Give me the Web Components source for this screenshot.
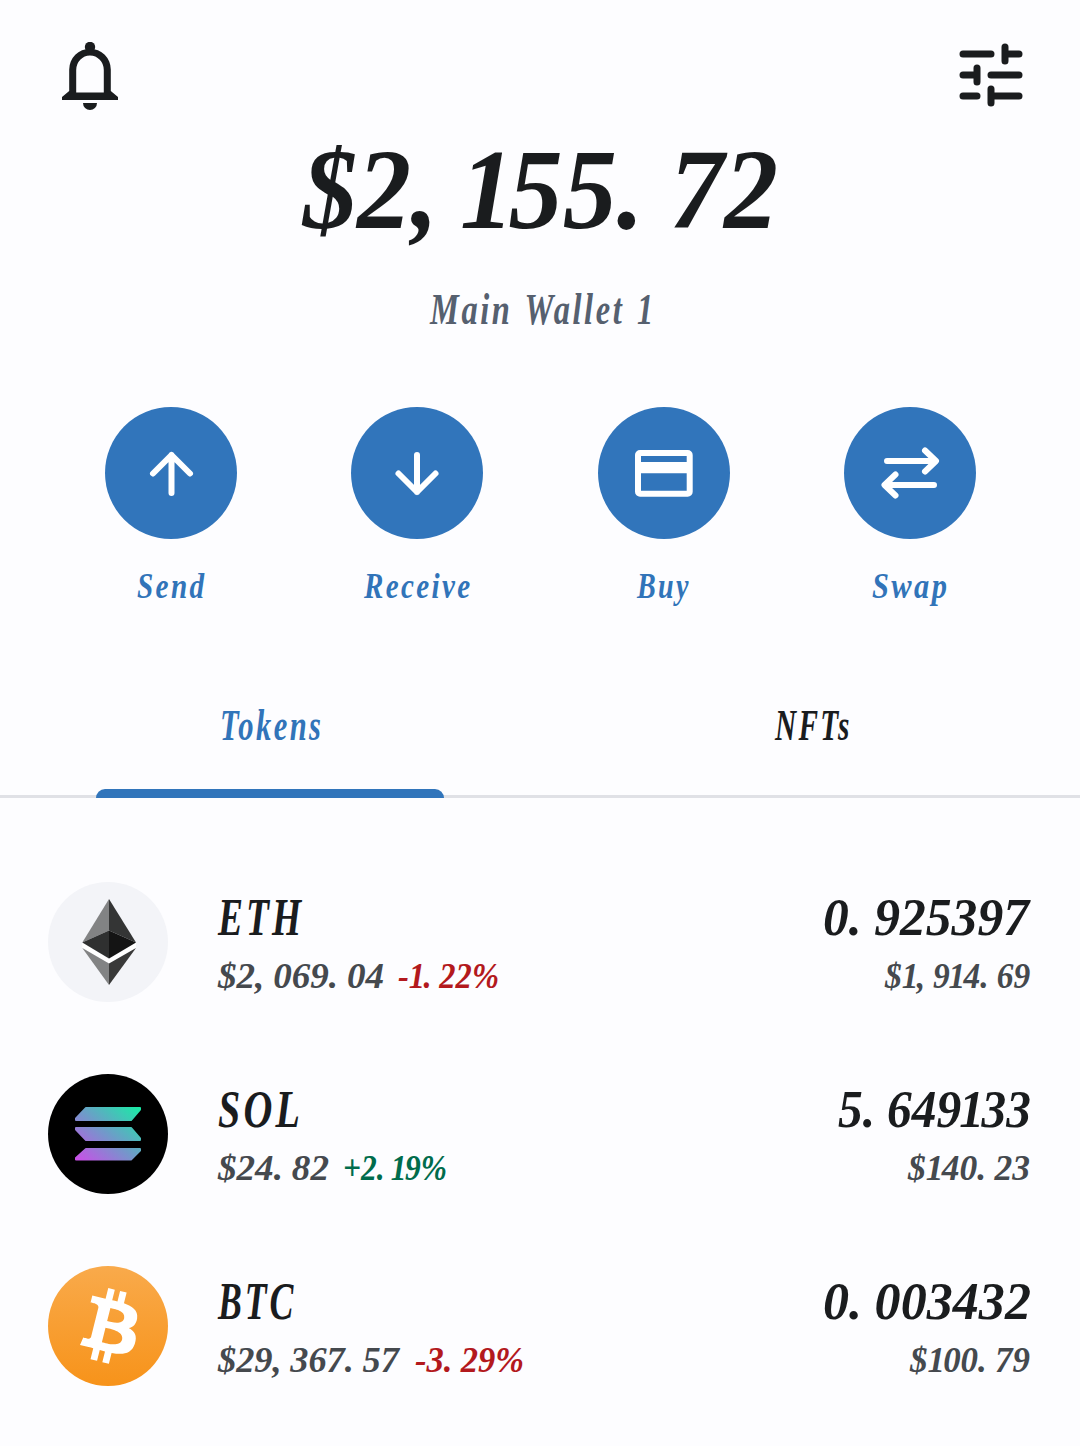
<!DOCTYPE html>
<html lang="en">
<head>
<meta charset="utf-8">
<title>Wallet</title>
<style>
    body {
        margin: 0;
        background: #fdfdff;
        color: #1a1c1e;
        font-family: "Liberation Serif", "Times New Roman", serif;
    }
</style>
</head>
<body>
<wallet-app></wallet-app>

<script>
const icons = {
    bell: `<svg width="56" height="68" viewBox="62 42 56 68" fill="#1a1c1e">
        <circle cx="90" cy="47" r="5.2"/>
        <path fill-rule="evenodd" d="M69.2 91V69.500a20.800 20.800 0 0 1 41.600 0V91l7.200 6v3H62v-3zM76.200 92.500h27.600V70a13.800 14.500 0 0 0-27.600 0z"/>
        <path d="M83 103h14a7 7 0 0 1-14 0z"/>
    </svg>`,
    tune: `<svg width="64" height="64" viewBox="959 43 64 64" fill="none" stroke="#1a1c1e" stroke-width="7" stroke-linecap="round">
        <path d="M963 54h28M1005 47v14M1005 54h14M963 75h14M977 68v14M991 75h28M963 96h14M991 89v14M991 96h28"/>
    </svg>`,
    send: '<path d="M66.500 86V48M48 66.500l18.500-18.500 18.500 18.500"/>',
    receive: '<path d="M66 48v37M47.500 66.500L66 85l18.500-18.500"/>',
    buy: '<rect x="40" y="46" width="51.700" height="40.700" rx="2"/><path d="M40 60.600h52" stroke-width="11.400" stroke-linecap="butt"/>',
    swap: '<path d="M43 54h48M81 43.500L92 54 81 64.500M90 78H41M51.500 67.500L40.500 78l11 10.500"/>'
};

const coins = {
    eth: `<circle cx="60" cy="60" r="60" fill="#f3f4f8"/>
        <path fill="#fff" d="M34.300 60.500v5.500L61 81.500 88 66v-5.500L61 77z"/>
        <path fill="#828384" d="M61 17v31.500L34.300 60.500z"/>
        <path fill="#343535" d="M61 17l27 43.500-27-12z"/>
        <path fill="#2f3030" d="M61 48.500v28L34.300 60.500z"/>
        <path fill="#141414" d="M61 48.500l27 12-27 16z"/>
        <path fill="#828384" d="M34.300 66L61 81.500V103z"/>
        <path fill="#393939" d="M88 66L61 81.500V103z"/>`,
    sol: `<linearGradient id="g" gradientUnits="userSpaceOnUse" x1="34" y1="91" x2="86" y2="29">
            <stop offset="0" stop-color="#cb4ee8"/><stop offset=".5" stop-color="#6f9bc9"/><stop offset="1" stop-color="#19eba6"/>
        </linearGradient>
        <circle cx="60" cy="60" r="60"/>
        <path fill="url(#g)" stroke="url(#g)" stroke-width="2" stroke-linejoin="round"
            d="M38 34h54v1.500L83 46H28v-1.500zM28 54h55l9 10.500V66H38l-10-10.500zM38 75h54v1.500L83 85.500H28V84z"/>`,
    btc: `<linearGradient id="g" x1="0" y1="0" x2="0" y2="1">
            <stop offset="0" stop-color="#f9aa4b"/><stop offset="1" stop-color="#f7931a"/>
        </linearGradient>
        <circle cx="60" cy="60" r="60" fill="url(#g)"/>
        <path fill="#fff" transform="translate(1 -.8) scale(3.8)" d="M23.189 14.020c.314-2.096-1.283-3.223-3.465-3.975l.708-2.840-1.728-.430-.690 2.765c-.454-.114-.920-.220-1.385-.326l.695-2.783L15.596 6l-.708 2.839c-.376-.086-.746-.170-1.104-.260l.002-.009-2.384-.595-.460 1.846s1.283.294 1.256.312c.700.175.826.638.805 1.006l-.806 3.235c.048.012.110.030.180.057l-.183-.045-1.130 4.532c-.086.212-.303.531-.793.410.018.025-1.256-.313-1.256-.313l-.858 1.978 2.250.561c.418.105.828.215 1.231.318l-.715 2.872 1.727.430.708-2.840c.472.127.930.245 1.378.357l-.706 2.828 1.728.430.715-2.866c2.948.558 5.164.333 6.097-2.333.752-2.146-.037-3.385-1.588-4.192 1.130-.260 1.980-1.003 2.207-2.538zm-3.950 5.538c-.533 2.147-4.148.986-5.320.695l.950-3.805c1.172.293 4.929.872 4.370 3.110zm.535-5.569c-.487 1.953-3.495.960-4.470.717l.860-3.450c.975.243 4.118.696 3.610 2.733z"/>`
};

// one line of italic text, stretched to the given width
class FitText extends HTMLElement {
    constructor() {
        super();
        this.attachShadow({ mode: "open" });
    }

    // wide cells for punctuation, a narrow one for the digit 1, loose letters
    getSpacing(text, size) {
        return [...text].map((char, i) => {
            const previous = text[i - 1] || "";
            let gap = 0;
            if (previous === "." || previous === ",") gap += 0.24;
            if (previous === "1") gap -= 0.05;
            if (char === "1" && /[\d.,]/.test(previous)) gap -= 0.04;
            if (/[A-Za-z]/.test(previous)) gap += 0.08;
            if (previous === " ") gap += 0.14;
            return (gap * size).toFixed(1);
        }).join(" ");
    }

    connectedCallback() {
        const text = this.getAttribute("text");
        const size = Number(this.getAttribute("size"));
        const width = Number(this.getAttribute("width"));
        const base = Math.round(size * 0.8);
        this.shadowRoot.innerHTML = `
            <style>
                :host { display: block; flex: none; width: ${width}px; height: ${size}px; }
                svg { display: block; overflow: visible; }
                text { font-size: ${size}px; font-weight: bold; font-style: italic; fill: currentColor; }
            </style>
            <svg width="${width}" height="${size}"><text y="${base}" dx="${this.getSpacing(text, size)}">${text}</text></svg>
        `;
        const node = this.shadowRoot.querySelector("text");
        node.setAttribute("transform", `scale(${width / node.getBBox().width} 1)`);
    }
}
customElements.define("fit-text", FitText);

class WalletHeader extends HTMLElement {
    constructor() {
        super();
        this.attachShadow({ mode: "open" });
    }

    connectedCallback() {
        this.shadowRoot.innerHTML = `
            <style>
                :host { display: flex; justify-content: space-between; align-items: flex-start; height: 137px; padding: 42px 57px 0 62px; box-sizing: border-box; }
                svg { display: block; }
                svg + svg { margin-top: 1px; }
            </style>
            ${icons.bell}${icons.tune}
        `;
    }
}
customElements.define("wallet-header", WalletHeader);

class WalletAction extends HTMLElement {
    constructor() {
        super();
        this.attachShadow({ mode: "open" });
    }

    connectedCallback() {
        this.shadowRoot.innerHTML = `
            <style>
                :host { flex: 1; display: flex; flex-direction: column; align-items: center; gap: 30px; color: #3174b9; }
                .circle { width: 132px; height: 132px; border-radius: 50%; background: #3175bb; }
                svg { display: block; }
            </style>
            <div class="circle">
                <svg width="132" height="132" fill="none" stroke="#fff" stroke-width="6" stroke-linecap="round" stroke-linejoin="round">${icons[this.getAttribute("icon")]}</svg>
            </div>
            <slot></slot>
        `;
    }
}
customElements.define("wallet-action", WalletAction);

class WalletTab extends HTMLElement {
    constructor() {
        super();
        this.attachShadow({ mode: "open" });
    }

    connectedCallback() {
        this.shadowRoot.innerHTML = `
            <style>
                :host { flex: 1; display: flex; flex-direction: column; align-items: center; justify-content: space-between; }
                :host([active]) { color: #3174b9; }
                .bar { width: 348px; height: 9px; border-radius: 9px 9px 0 0; }
                :host([active]) .bar { background: #3175bb; }
            </style>
            <slot></slot>
            <div class="bar"></div>
        `;
    }
}
customElements.define("wallet-tab", WalletTab);

class TokenRow extends HTMLElement {
    constructor() {
        super();
        this.attachShadow({ mode: "open" });
    }

    connectedCallback() {
        this.shadowRoot.innerHTML = `
            <style>
                :host { display: flex; height: 120px; }
                svg { display: block; flex: none; margin-right: 50px; }
                .info, .amount { display: flex; flex-direction: column; gap: 14px; padding-top: 11px; }
                .info { flex: 1; }
                .amount { align-items: flex-end; }
                .line { display: flex; gap: 13px; }
                .line, .value { color: #45494e; }
            </style>
            <svg width="120" height="120">${coins[this.getAttribute("coin")]}</svg>
            <div class="info">
                <slot name="name"></slot>
                <div class="line"><slot name="price"></slot><slot name="change"></slot></div>
            </div>
            <div class="amount">
                <slot name="amount"></slot>
                <div class="value"><slot name="value"></slot></div>
            </div>
        `;
    }
}
customElements.define("token-row", TokenRow);

class WalletApp extends HTMLElement {
    constructor() {
        super();
        this.attachShadow({ mode: "open" });
    }

    getStyles() {
        return `
            <style>
                :host { display: block; width: 1080px; height: 1446px; overflow: hidden; }
                .summary { display: flex; flex-direction: column; align-items: center; gap: 38px; padding-left: 3px; }
                .wallet { color: #56606f; }
                .actions { display: flex; margin-top: 74px; padding: 0 47px 0 48px; }
                .tabs { display: flex; height: 93px; margin-top: 100px; background: linear-gradient(#e0e1e6, #e0e1e6) bottom / 100% 3px no-repeat; }
                .nfts { padding-left: 4px; }
                .tokens { display: flex; flex-direction: column; gap: 72px; padding: 84px 49px 0 48px; }
                .down { color: #b3191d; }
                .up { color: #006c4c; }
            </style>
        `;
    }

    connectedCallback() {
        this.shadowRoot.innerHTML = `
            ${this.getStyles()}
            <wallet-header></wallet-header>
            <div class="summary">
                <fit-text text="$2,155.72" size="114" width="477"></fit-text>
                <fit-text class="wallet" text="Main Wallet 1" size="44" width="224"></fit-text>
            </div>
            <div class="actions">
                <wallet-action icon="send"><fit-text text="Send" size="36" width="68"></fit-text></wallet-action>
                <wallet-action icon="receive"><fit-text text="Receive" size="36" width="107"></fit-text></wallet-action>
                <wallet-action icon="buy"><fit-text text="Buy" size="36" width="53"></fit-text></wallet-action>
                <wallet-action icon="swap"><fit-text text="Swap" size="36" width="75"></fit-text></wallet-action>
            </div>
            <div class="tabs">
                <wallet-tab active><fit-text text="Tokens" size="44" width="101"></fit-text></wallet-tab>
                <wallet-tab><fit-text class="nfts" text="NFTs" size="44" width="75"></fit-text></wallet-tab>
            </div>
            <div class="tokens">
                <token-row coin="eth">
                    <fit-text slot="name" text="ETH" size="52" width="85"></fit-text>
                    <fit-text slot="price" text="$2,069.04" size="36" width="167"></fit-text>
                    <fit-text slot="change" class="down" text="-1.22%" size="36" width="101"></fit-text>
                    <fit-text slot="amount" text="0.925397" size="52" width="208"></fit-text>
                    <fit-text slot="value" text="$1,914.69" size="36" width="146"></fit-text>
                </token-row>
                <token-row coin="sol">
                    <fit-text slot="name" text="SOL" size="52" width="82"></fit-text>
                    <fit-text slot="price" text="$24.82" size="36" width="112"></fit-text>
                    <fit-text slot="change" class="up" text="+2.19%" size="36" width="104"></fit-text>
                    <fit-text slot="amount" text="5.649133" size="52" width="193"></fit-text>
                    <fit-text slot="value" text="$140.23" size="36" width="123"></fit-text>
                </token-row>
                <token-row coin="btc">
                    <fit-text slot="name" text="BTC" size="52" width="77"></fit-text>
                    <fit-text slot="price" text="$29,367.57" size="36" width="184"></fit-text>
                    <fit-text slot="change" class="down" text="-3.29%" size="36" width="109"></fit-text>
                    <fit-text slot="amount" text="0.003432" size="52" width="208"></fit-text>
                    <fit-text slot="value" text="$100.79" size="36" width="121"></fit-text>
                </token-row>
            </div>
        `;
    }
}
customElements.define("wallet-app", WalletApp);
</script>
</body>
</html>
